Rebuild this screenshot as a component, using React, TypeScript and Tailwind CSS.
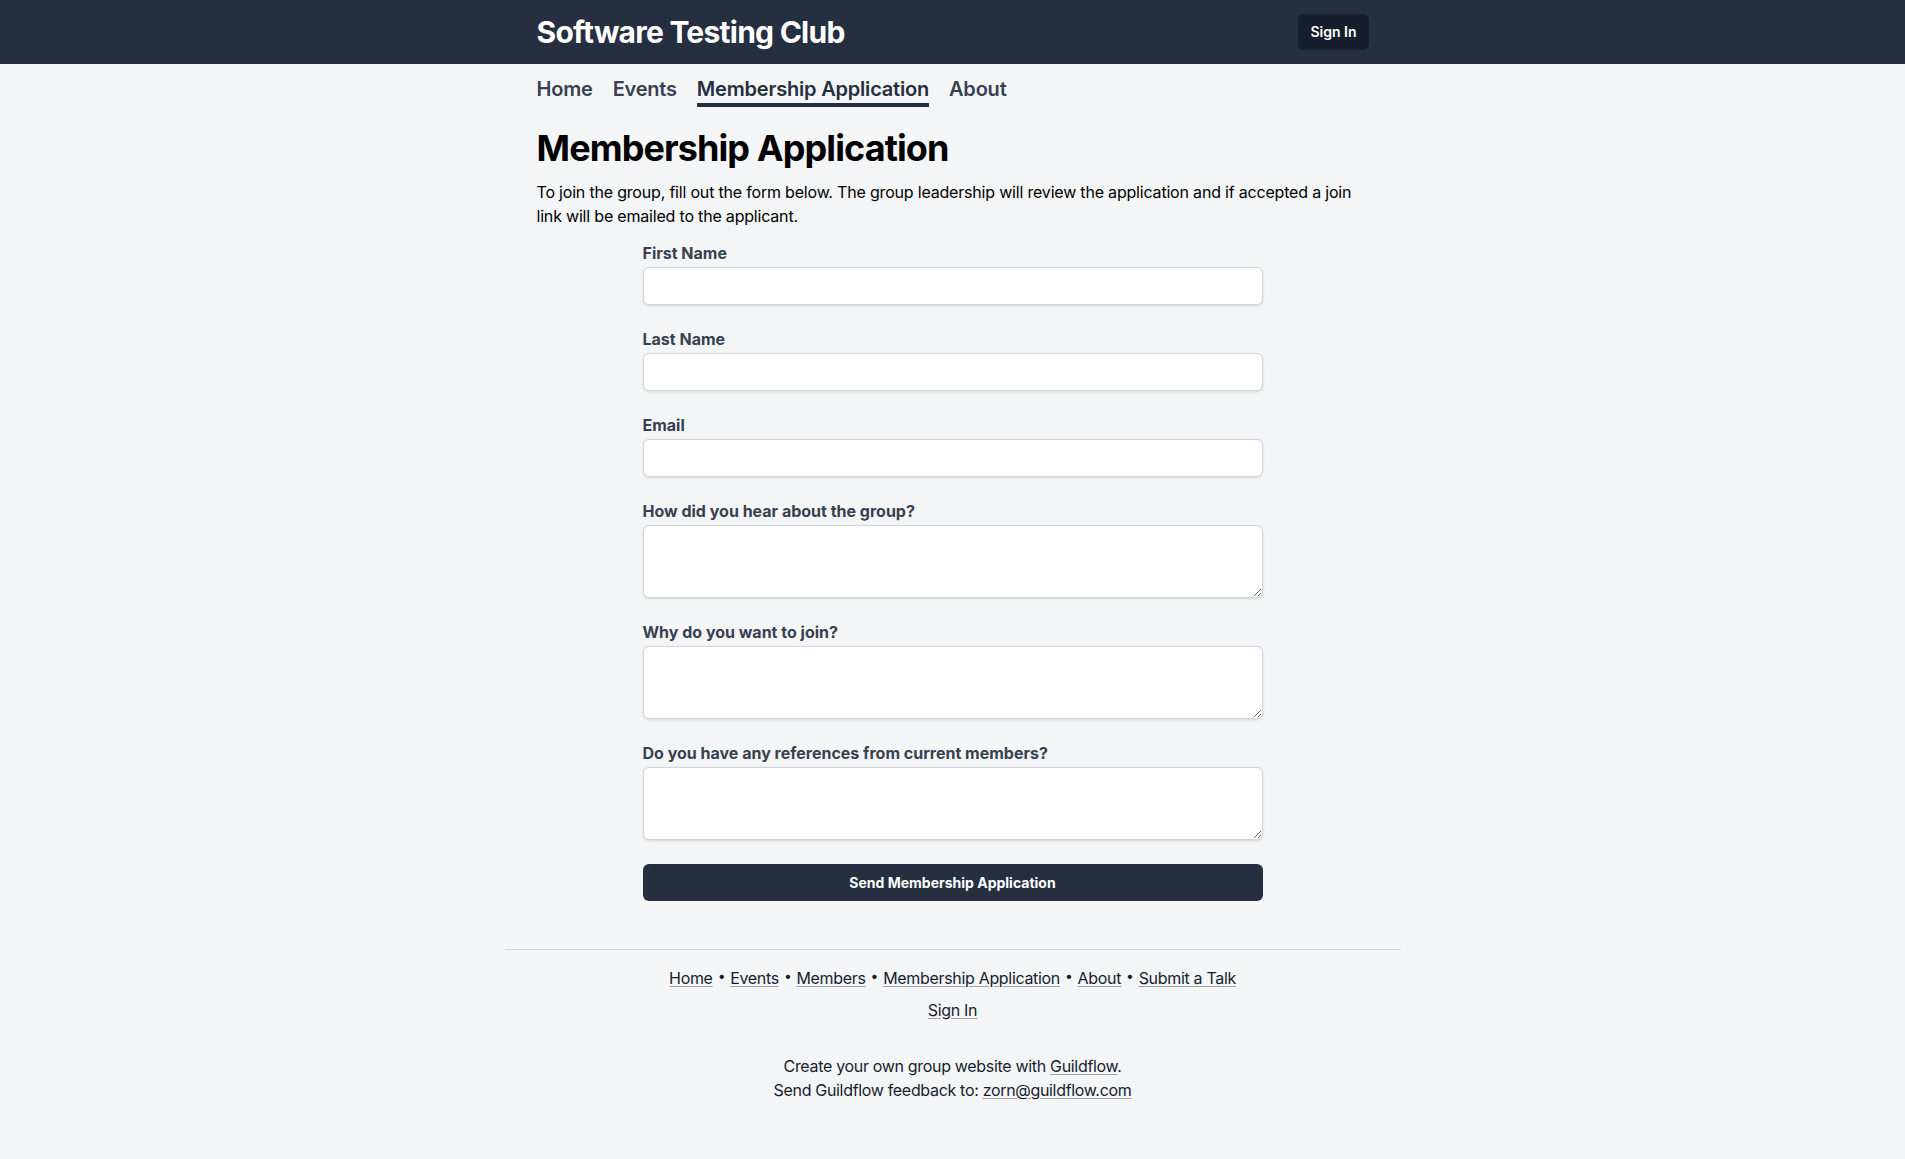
import React from "react";

const fields = [
  { label: "First Name", type: "input" },
  { label: "Last Name", type: "input" },
  { label: "Email", type: "input" },
  { label: "How did you hear about the group?", type: "textarea" },
  { label: "Why do you want to join?", type: "textarea" },
  { label: "Do you have any references from current members?", type: "textarea" },
];

const footerLinks = ["Home", "Events", "Members", "Membership Application", "About", "Submit a Talk"];

const App: React.FC = () => {
  return (
    <div
      className="min-h-screen bg-[#f4f5f7] text-black"
      style={{ fontFamily: "Inter, 'Noto Sans', sans-serif" }}>
      <header className="bg-[#252f3f]">
        <div className="max-w-4xl mx-auto px-8 h-16 flex items-center justify-between">
          <h1 className="text-3xl font-bold text-white tracking-tight">Software Testing Club</h1>
          <button className="px-3 py-2 bg-[#161e2e] rounded-md text-white text-sm font-semibold">
            Sign In
          </button>
        </div>
      </header>

      <div className="max-w-4xl mx-auto px-8">
        <nav className="flex gap-5 pt-[11px]">
          <a className="text-xl leading-7 font-semibold tracking-[-0.01em] text-[#374151] border-b-4 border-transparent">Home</a>
          <a className="text-xl leading-7 font-semibold tracking-[-0.01em] text-[#374151] border-b-4 border-transparent">Events</a>
          <a className="text-xl leading-7 font-semibold tracking-[-0.01em] text-[#252f3f] border-b-4 border-[#252f3f]">
            Membership Application
          </a>
          <a className="text-xl leading-7 font-semibold tracking-[-0.01em] text-[#374151] border-b-4 border-transparent">About</a>
        </nav>

        <h2 className="mt-[21px] text-4xl font-bold tracking-tight">Membership Application</h2>
        <p className="mt-3 text-base leading-6 tracking-[-0.012em]">
          To join the group, fill out the form below. The group leadership will review the application and if
          accepted a join link will be emailed to the applicant.
        </p>

        <form className="w-[620px] mx-auto mt-[15px] flex flex-col gap-6">
          {fields.map((f) => (
            <div key={f.label}>
              <label className="block text-base leading-5 font-bold text-[#374151]">{f.label}</label>
              {f.type === "input" ? (
                <input
                  type="text"
                  className="mt-1 block w-full h-[38px] px-3 bg-white border border-[#d2d6dc] rounded-md shadow-sm"
                />
              ) : (
                <textarea className="mt-1 block w-full h-[73px] px-3 py-2 bg-white border border-[#d2d6dc] rounded-md shadow-sm" />
              )}
            </div>
          ))}
          <button
            type="button"
            className="w-full h-[37px] bg-[#252f3f] rounded-md text-white text-sm font-bold">
            Send Membership Application
          </button>
        </form>
      </div>

      <footer className="max-w-4xl mx-auto mt-12 border-t border-[#d2d6dc] pt-4 pb-12 tracking-[-0.02em]">
        <div className="flex flex-col items-center gap-2 text-base leading-6 text-[#161e2e]">
          <div className="flex">
            {footerLinks.map((l, i) => (
              <span key={l} className="flex">
                <a className="underline decoration-[#9ca3af] underline-offset-2">{l}</a>
                {i < footerLinks.length - 1 && <span className="mx-[5px] text-sm">•</span>}
              </span>
            ))}
          </div>
          <a className="underline decoration-[#9ca3af] underline-offset-2">Sign In</a>
        </div>
        <div className="mt-8 text-center text-base leading-6 text-[#161e2e]">
          <p>
            Create your own group website with{" "}
            <a className="underline decoration-[#9ca3af] underline-offset-2">Guildflow</a>.
          </p>
          <p>
            Send Guildflow feedback to:{" "}
            <a className="underline decoration-[#9ca3af] underline-offset-2">zorn@guildflow.com</a>
          </p>
        </div>
      </footer>
    </div>
  );
};

export default App;
